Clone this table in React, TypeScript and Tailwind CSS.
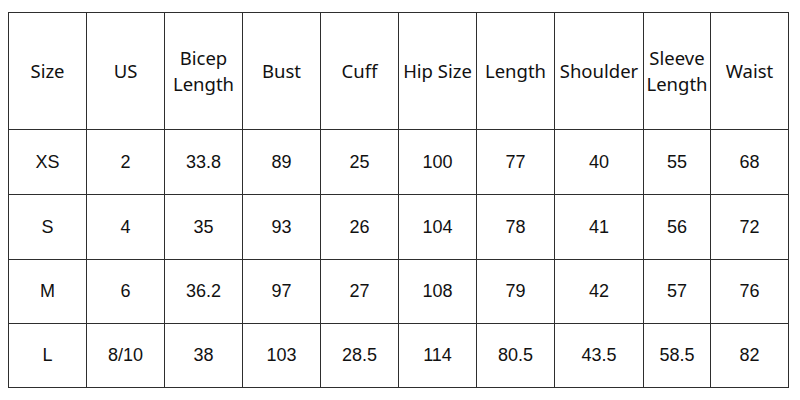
const headers = [
  "Size",
  "US",
  "Bicep Length",
  "Bust",
  "Cuff",
  "Hip Size",
  "Length",
  "Shoulder",
  "Sleeve Length",
  "Waist",
];

const colWidths = ["w-[78px]", "w-[78px]", "w-[78px]", "w-[78px]", "w-[78px]", "w-[78px]", "w-[78px]", "w-[89px]", "w-[67px]", "w-[78px]"];

const rows = [
  { h: "h-[65px]", cells: ["XS", "2", "33.8", "89", "25", "100", "77", "40", "55", "68"] },
  { h: "h-[65px]", cells: ["S", "4", "35", "93", "26", "104", "78", "41", "56", "72"] },
  { h: "h-[64px]", cells: ["M", "6", "36.2", "97", "27", "108", "79", "42", "57", "76"] },
  { h: "h-[64px]", cells: ["L", "8/10", "38", "103", "28.5", "114", "80.5", "43.5", "58.5", "82"] },
];

export default function App() {
  return (
    <div className="w-[800px] h-[400px] bg-white pt-[12px] pl-[8px]">
      <table className="border-collapse table-fixed w-[781px] text-[#111]">
        <colgroup>
          {colWidths.map((w, i) => (
            <col key={i} className={w} />
          ))}
        </colgroup>
        <thead>
          <tr className="h-[117px]">
            {headers.map((h) => (
              <th
                key={h}
                className="border border-[#2e2e2e] p-0 font-normal text-center align-middle text-[18.5px] leading-[26px] font-['Noto_Sans',sans-serif]"
              >
                {h.includes(" ") && h !== "Hip Size" ? (
                  <>
                    {h.split(" ")[0]}
                    <br />
                    {h.split(" ")[1]}
                  </>
                ) : (
                  <span className="whitespace-nowrap">{h}</span>
                )}
              </th>
            ))}
          </tr>
        </thead>
        <tbody>
          {rows.map((r, ri) => (
            <tr key={ri} className={r.h}>
              {r.cells.map((c, ci) => (
                <td
                  key={ci}
                  className="border border-[#2e2e2e] p-0 text-center align-middle text-[18px] font-['Liberation_Sans',Arial,sans-serif]"
                >
                  {c}
                </td>
              ))}
            </tr>
          ))}
        </tbody>
      </table>
    </div>
  );
}
